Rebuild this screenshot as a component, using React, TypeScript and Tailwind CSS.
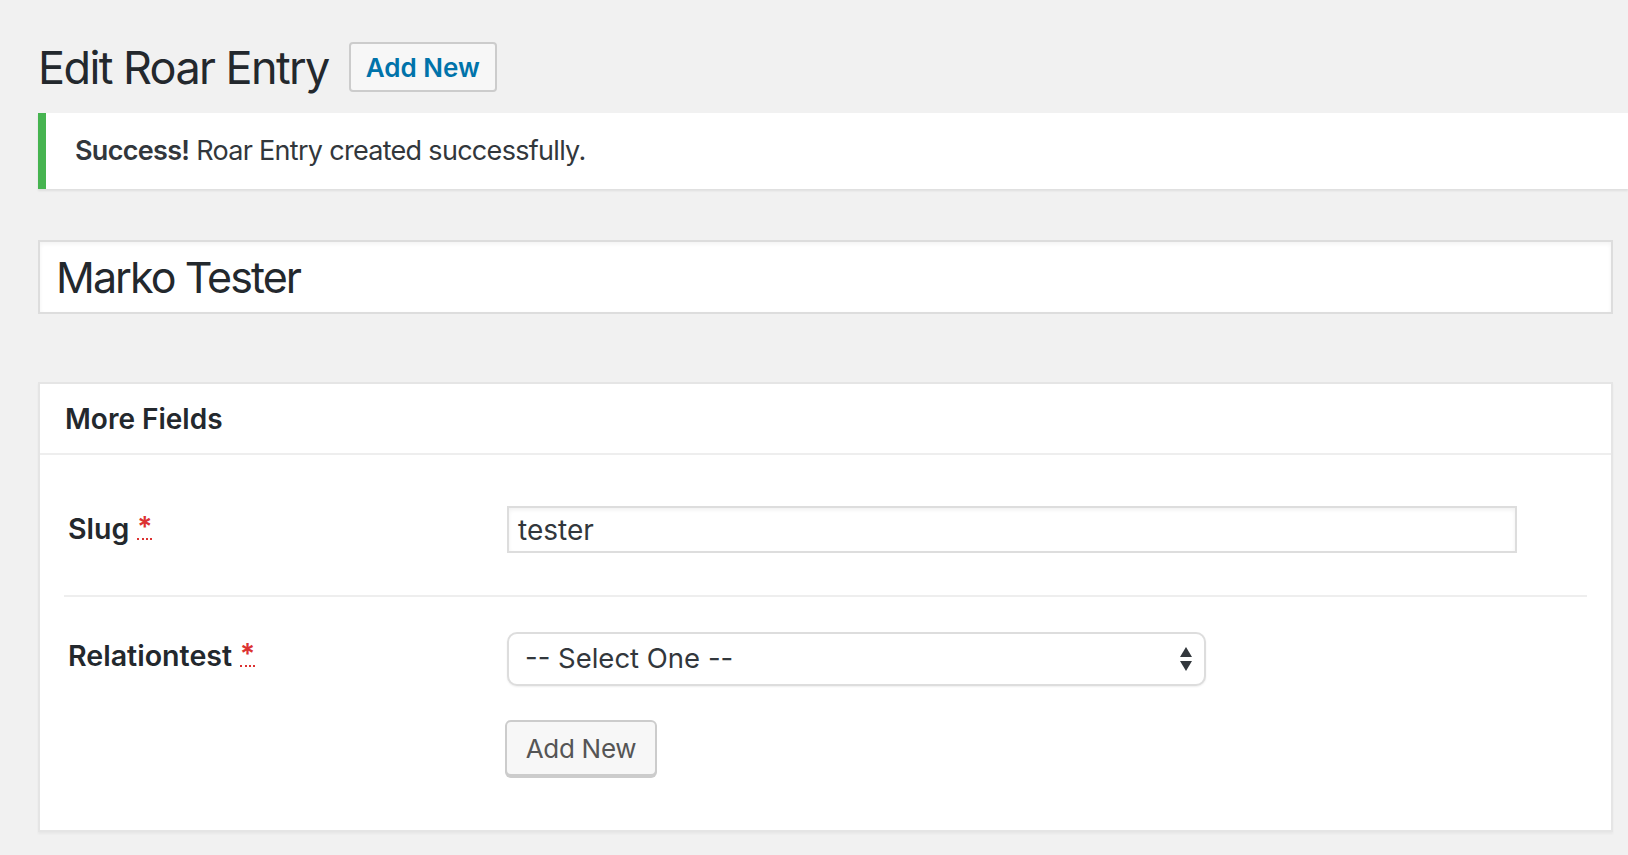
import React from 'react';

const font = { fontFamily: 'Inter, "Noto Sans", sans-serif' };

function Required() {
  return (
    <span className="ml-[8px] inline-block text-[#dc3232] border-b-[2px] border-dotted border-[#dc3232] leading-[18px] h-[22px] text-[28px] font-semibold">
      *
    </span>
  );
}

function SelectArrows() {
  return (
    <svg width="12" height="25" viewBox="0 0 12 25" className="shrink-0">
      <path d="M6 0 L12 10 L0 10 Z" fill="#32373c" />
      <path d="M0 14 L12 14 L6 24 Z" fill="#32373c" />
    </svg>
  );
}

export default function App() {
  return (
    <div className="min-h-screen bg-[#f1f1f1] pl-[38px] pr-[15px] pt-[42px] text-[#23282d] overflow-hidden" style={font}>
      <div className="flex items-center h-[50px]">
        <h1 className="text-[45px] font-normal leading-none tracking-[-1.6px] text-[#23282d]">Edit Roar Entry</h1>
        <button className="ml-[20px] h-[50px] w-[148px] rounded-[4px] border-[2px] border-[#cccccc] bg-[#f7f7f7] text-[26px] font-semibold text-[#0073aa]">
          Add New
        </button>
      </div>

      <div className="mt-[21px] -mr-[15px] h-[76px] flex items-center bg-white border-l-[8px] border-[#46b450] pl-[29px] shadow-[0_2px_2px_rgba(0,0,0,0.08)]">
        <p className="text-[27px] tracking-[-0.7px] text-[#32373c]">
          <span className="font-semibold">Success!</span> Roar Entry created successfully.
        </p>
      </div>

      <div className="mt-[51px] h-[74px] flex items-center bg-white border-[2px] border-[#dddddd] pl-[16px] shadow-[inset_0_2px_4px_rgba(0,0,0,0.05)]">
        <span className="text-[43px] tracking-[-1.95px] text-[#23282d] leading-none">Marko Tester</span>
      </div>

      <div className="mt-[68px] bg-white border-[2px] border-[#e5e5e5] shadow-[0_2px_2px_rgba(0,0,0,0.04)]">
        <div className="h-[71px] flex items-center pl-[25px] border-b-[2px] border-[#eeeeee]">
          <h2 className="text-[28px] font-semibold text-[#23282d]">More Fields</h2>
        </div>

        <div className="px-[24px] pt-[51px] pb-[54px]">
          <div className="flex items-start">
            <div className="w-[443px] shrink-0 pl-[4px] pt-[2px] flex items-center">
              <span className="text-[28.5px] font-semibold text-[#23282d]">Slug</span>
              <Required />
            </div>
            <div className="w-[1010px] h-[47px] flex items-center border-[2px] border-[#dddddd] bg-white pl-[9px] shadow-[inset_0_2px_4px_rgba(0,0,0,0.06)]">
              <span className="text-[28px] text-[#32373c]">tester</span>
            </div>
          </div>

          <div className="mt-[42px] h-[2px] bg-[#eeeeee]" />

          <div className="mt-[35px] flex items-start">
            <div className="w-[443px] shrink-0 pl-[4px] pt-[3px] flex items-center">
              <span className="text-[28.6px] font-semibold text-[#23282d]">Relationtest</span>
              <Required />
            </div>
            <div>
              <div className="w-[699px] h-[54px] flex items-center justify-between rounded-[10px] border-[2px] border-[#dddddd] bg-white pl-[16px] pr-[12px] shadow-[0_1px_2px_rgba(0,0,0,0.07)]">
                <span className="text-[27.5px] text-[#32373c]">-- Select One --</span>
                <SelectArrows />
              </div>
              <button className="-ml-[2px] mt-[34px] h-[56px] w-[152px] rounded-[6px] border-[2px] border-[#cccccc] bg-[#f7f7f7] text-[26px] tracking-[-0.3px] text-[#555555] shadow-[0_2px_0_#cccccc]">
                Add New
              </button>
            </div>
          </div>
        </div>
      </div>
    </div>
  );
}
